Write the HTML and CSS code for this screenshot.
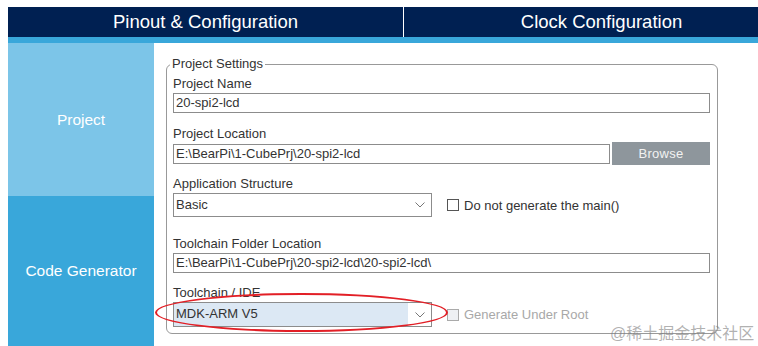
FILE: index.html
```html
<!DOCTYPE html>
<html>
    <head>
        <meta charset="UTF-8">
        <title>Project Manager</title>
        <link rel="stylesheet" href="styles.css">
    </head>
    <body>
        <div class="page">
            <div class="tabs">
                <div class="tab">Pinout &amp; Configuration</div>
                <div class="tab tab-right">Clock Configuration</div>
            </div>
            <div class="strip"></div>

            <div class="content">
                <div class="sidebar">
                    <div class="side-item side-project">Project</div>
                    <div class="side-item side-code">Code Generator</div>
                </div>

                <div class="main">
                    <fieldset class="settings">
                        <legend>Project Settings</legend>

                        <div class="field">
                            <label>Project Name</label>
                            <div class="input">20-spi2-lcd</div>
                        </div>

                        <div class="field field-loc">
                            <label>Project Location</label>
                            <div class="row">
                                <div class="input input-grow">E:\BearPi\1-CubePrj\20-spi2-lcd</div>
                                <div class="button">Browse</div>
                            </div>
                        </div>

                        <div class="field field-app">
                            <label>Application Structure</label>
                            <div class="row">
                                <div class="select">
                                    <span class="select-text">Basic</span>
                                    <span class="chevron">
                                        <svg width="10" height="6" viewBox="0 0 10 6"><path d="M0.5 0.5 L5 5 L9.5 0.5" fill="none" stroke="#777" stroke-width="1"/></svg>
                                    </span>
                                </div>
                                <div class="check">
                                    <span class="box"></span>
                                    <span>Do not generate the main()</span>
                                </div>
                            </div>
                        </div>

                        <div class="field field-folder">
                            <label>Toolchain Folder Location</label>
                            <div class="input">E:\BearPi\1-CubePrj\20-spi2-lcd\20-spi2-lcd\</div>
                        </div>

                        <div class="field field-ide">
                            <label>Toolchain / IDE</label>
                            <div class="row ide-row">
                                <div class="select select-ide">
                                    <span class="select-text select-active">MDK-ARM V5</span>
                                    <span class="chevron">
                                        <svg width="10" height="6" viewBox="0 0 10 6"><path d="M0.5 0.5 L5 5 L9.5 0.5" fill="none" stroke="#777" stroke-width="1"/></svg>
                                    </span>
                                </div>
                                <div class="check check-disabled">
                                    <span class="box"></span>
                                    <span>Generate Under Root</span>
                                </div>
                                <div class="mark"></div>
                            </div>
                        </div>
                    </fieldset>
                </div>
            </div>
        </div>

        <div class="watermark">@稀土掘金技术社区</div>
    </body>
</html>
```

FILE: styles.css
```css
html, body {
    margin: 0;
    padding: 0;
    background: #fff;
    font-family: "Liberation Sans", Arial, "Noto Sans CJK SC", sans-serif;
    overflow: hidden;
}
.page {
    padding: 7px 0 0 8px;
    width: 750px;
    height: 339px;
    overflow: hidden;
}
.tabs {
    display: flex;
    height: 30px;
    background-color: #002052;
}
.tab {
    flex: 0 0 395px;
    color: #fff;
    font-size: 18.5px;
    line-height: 30px;
    text-align: center;
}
.tab-right {
    border-left: 1px solid #fff;
}
.strip {
    height: 6px;
    background-color: #39a7da;
}
.content {
    display: flex;
    height: 303px;
}
.sidebar {
    width: 146px;
    display: flex;
    flex-direction: column;
}
.side-item {
    display: flex;
    align-items: center;
    justify-content: center;
    color: #fff;
    font-size: 15.5px;
}
.side-project {
    height: 153px;
    background-color: #7cc5e8;
}
.side-code {
    flex: 1;
    background-color: #39a7da;
}
.main {
    flex: 1;
    padding: 13px 0 0 12px;
}
.settings {
    width: 537px;
    margin: 0;
    padding: 4px 7px 6px 6px;
    border: 1px solid #999;
    border-radius: 6px;
    color: #333;
    font-size: 13px;
}
.settings > legend {
    padding: 0 2px;
    margin-left: -3px;
    line-height: 16px;
}
.field > label {
    display: block;
    line-height: 16px;
}
.field-loc {
    margin-top: 13px;
}
.field-app {
    margin-top: 11px;
}
.field-folder {
    margin-top: 19px;
}
.field-ide {
    margin-top: 12px;
}
.input {
    box-sizing: border-box;
    height: 20px;
    margin-top: 1px;
    padding: 0 2px;
    border: 1px solid #8c8c8c;
    line-height: 18px;
    white-space: nowrap;
    overflow: hidden;
}
.row {
    display: flex;
    align-items: center;
}
.input-grow {
    flex: 1;
    margin-right: 2px;
}
.button {
    width: 98px;
    height: 23px;
    line-height: 23px;
    background-color: #8e969c;
    color: #f2f2f2;
    text-align: center;
    letter-spacing: 0.3px;
}
.select {
    box-sizing: border-box;
    display: flex;
    width: 259px;
    height: 24px;
    margin-top: 1px;
    border: 1px solid #8c8c8c;
}
.select-ide {
    height: 25px;
}
.select-text {
    flex: 1;
    padding-left: 2px;
    line-height: 22px;
}
.select-active {
    background-color: #dce8f4;
}
.chevron {
    width: 23px;
    display: flex;
    align-items: center;
    justify-content: center;
}
.check {
    display: flex;
    align-items: center;
    margin-left: 15px;
    margin-top: 1px;
}
.check > .box {
    box-sizing: border-box;
    width: 12px;
    height: 12px;
    margin-right: 5px;
    border: 1px solid #555;
    background: #fff;
}
.check-disabled {
    color: #a8a8a8;
}
.check-disabled > .box {
    border-color: #aaa;
    background: #eef0f3;
}
.ide-row {
    position: relative;
}
.mark {
    position: absolute;
    left: -18px;
    top: -8px;
    width: 293px;
    height: 39px;
    box-sizing: border-box;
    border: 2px solid #e21f26;
    border-radius: 50%;
}
.watermark {
    position: absolute;
    left: 610px;
    top: 320px;
    font-size: 16px;
    color: rgba(125, 125, 125, 0.6);
    white-space: nowrap;
}
```
